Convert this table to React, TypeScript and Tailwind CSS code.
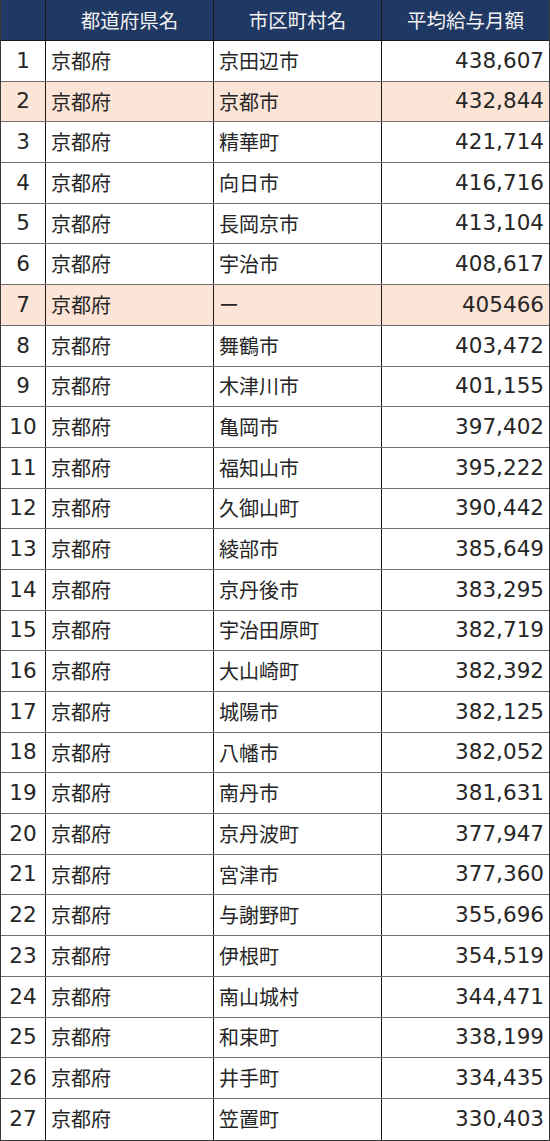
const rows: [string, string, string][] = [
  ['京都府', '京田辺市', '438,607'],
  ['京都府', '京都市', '432,844'],
  ['京都府', '精華町', '421,714'],
  ['京都府', '向日市', '416,716'],
  ['京都府', '長岡京市', '413,104'],
  ['京都府', '宇治市', '408,617'],
  ['京都府', 'ー', '405466'],
  ['京都府', '舞鶴市', '403,472'],
  ['京都府', '木津川市', '401,155'],
  ['京都府', '亀岡市', '397,402'],
  ['京都府', '福知山市', '395,222'],
  ['京都府', '久御山町', '390,442'],
  ['京都府', '綾部市', '385,649'],
  ['京都府', '京丹後市', '383,295'],
  ['京都府', '宇治田原町', '382,719'],
  ['京都府', '大山崎町', '382,392'],
  ['京都府', '城陽市', '382,125'],
  ['京都府', '八幡市', '382,052'],
  ['京都府', '南丹市', '381,631'],
  ['京都府', '京丹波町', '377,947'],
  ['京都府', '宮津市', '377,360'],
  ['京都府', '与謝野町', '355,696'],
  ['京都府', '伊根町', '354,519'],
  ['京都府', '南山城村', '344,471'],
  ['京都府', '和束町', '338,199'],
  ['京都府', '井手町', '334,435'],
  ['京都府', '笠置町', '330,403'],
];

const highlighted = [2, 7];

const jp = "font-['Noto_Sans_CJK_JP',sans-serif]";
const num = "font-['DejaVu_Sans','Noto_Sans_CJK_JP',sans-serif]";

export default function App() {
  return (
    <div className="w-[550px] h-[1141px] bg-white text-[#262626] overflow-hidden">
      <div className="border-l border-r border-b border-[#3a3a3a] w-[550px]">
        <div className="grid grid-cols-[45px_168px_168px_1fr] h-[41px] bg-[#203864] border-b border-[#1a1a1a] text-[#f2f2f2]">
          <div className="border-r border-[#1a1a1a]" />
          <div className={`flex items-center justify-center border-r border-[#1a1a1a] text-[19.5px] ${jp}`}>都道府県名</div>
          <div className={`flex items-center justify-center border-r border-[#1a1a1a] text-[19.5px] ${jp}`}>市区町村名</div>
          <div className={`flex items-center justify-center text-[19.5px] ${jp}`}>平均給与月額</div>
        </div>
        {rows.map(([pref, city, salary], i) => {
          const rank = i + 1;
          const bg = highlighted.includes(rank) ? 'bg-[#fce4d6]' : 'bg-white';
          const last = rank === rows.length;
          return (
            <div
              key={rank}
              className={`grid grid-cols-[45px_168px_168px_1fr] h-[40.7px] ${bg} ${last ? '' : 'border-b border-[#6e6e6e]'}`}
            >
              <div className={`flex items-center justify-center border-r border-[#1a1a1a] text-[21.5px] ${num}`}>{rank}</div>
              <div className={`flex items-center pl-[5px] border-r border-[#1a1a1a] text-[20px] ${jp}`}>{pref}</div>
              <div className={`flex items-center pl-[5px] border-r border-[#1a1a1a] text-[20px] ${jp}`}>{city}</div>
              <div className={`flex items-center justify-end pr-[5px] text-[21.5px] ${num}`}>{salary}</div>
            </div>
          );
        })}
      </div>
    </div>
  );
}
